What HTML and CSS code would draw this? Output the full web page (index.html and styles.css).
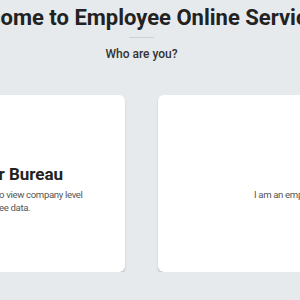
FILE: index.html
```html
<!DOCTYPE html>
<html lang="en">
<head>
    <meta charset="UTF-8">
    <meta name="viewport" content="width=device-width, initial-scale=1.0">
    <title>Employee Online Services</title>
    <link rel="stylesheet" href="styles.css">
</head>
<body>
    <div class="page">
        <header class="intro">
            <h1>Welcome to Employee Online Services</h1>
            <hr class="divider">
            <p class="question">Who are you?</p>
        </header>

        <main class="choices">
            <a class="choice-card choice-employer" href="#">
                <div class="choice-art"></div>
                <h2>Employer Bureau</h2>
                <p>Select to view company level<br>employee data.</p>
            </a>
            <a class="choice-card choice-employee" href="#">
                <div class="choice-art"></div>
                <h2></h2>
                <p>I am an employee.</p>
            </a>
        </main>
    </div>
</body>
</html>
```

FILE: styles.css
```css
* {
    margin: 0;
    padding: 0;
    box-sizing: border-box;
}

body {
    font-family: Roboto, 'Liberation Sans', Arial, sans-serif;
    background-color: #e7eaed;
    color: #222;
    overflow: hidden;
    padding-right: 17px;
    display: flex;
    justify-content: center;
}

.page {
    flex: 0 0 auto;
    width: 600px;
    display: flex;
    flex-direction: column;
    align-items: center;
}

.intro {
    display: flex;
    flex-direction: column;
    align-items: center;
    padding-top: 6px;
}

h1 {
    font-size: 22px;
    font-weight: 700;
    line-height: 24px;
    white-space: nowrap;
    color: #222;
}

.divider {
    width: 25px;
    border: none;
    border-top: 1px solid #cdd1d5;
    margin-top: 7px;
}

.question {
    font-size: 12px;
    font-weight: 500;
    color: #333;
    margin-top: 9px;
}

.choices {
    display: flex;
    gap: 33px;
    margin-top: 34px;
}

.choice-card {
    width: 270px;
    height: 177px;
    background-color: white;
    border-radius: 6px;
    box-shadow: 0 2px 2px rgba(0, 0, 0, 0.18);
    text-decoration: none;
    color: inherit;
    padding-right: 20px;
    display: flex;
    flex-direction: column;
}

.choice-art {
    height: 68px;
}

.choice-card h2 {
    font-size: 17px;
    font-weight: 700;
    color: #222;
    height: 22px;
    line-height: 22px;
    white-space: nowrap;
}

.choice-card p {
    font-size: 9.6px;
    letter-spacing: -0.35px;
    color: #555;
    line-height: 13px;
    margin-top: 3px;
    white-space: nowrap;
}

.choice-employer {
    padding-left: 115px;
}

.choice-employer h2 {
    margin-left: -37px;
}

.choice-employee {
    padding-left: 96px;
}
```
